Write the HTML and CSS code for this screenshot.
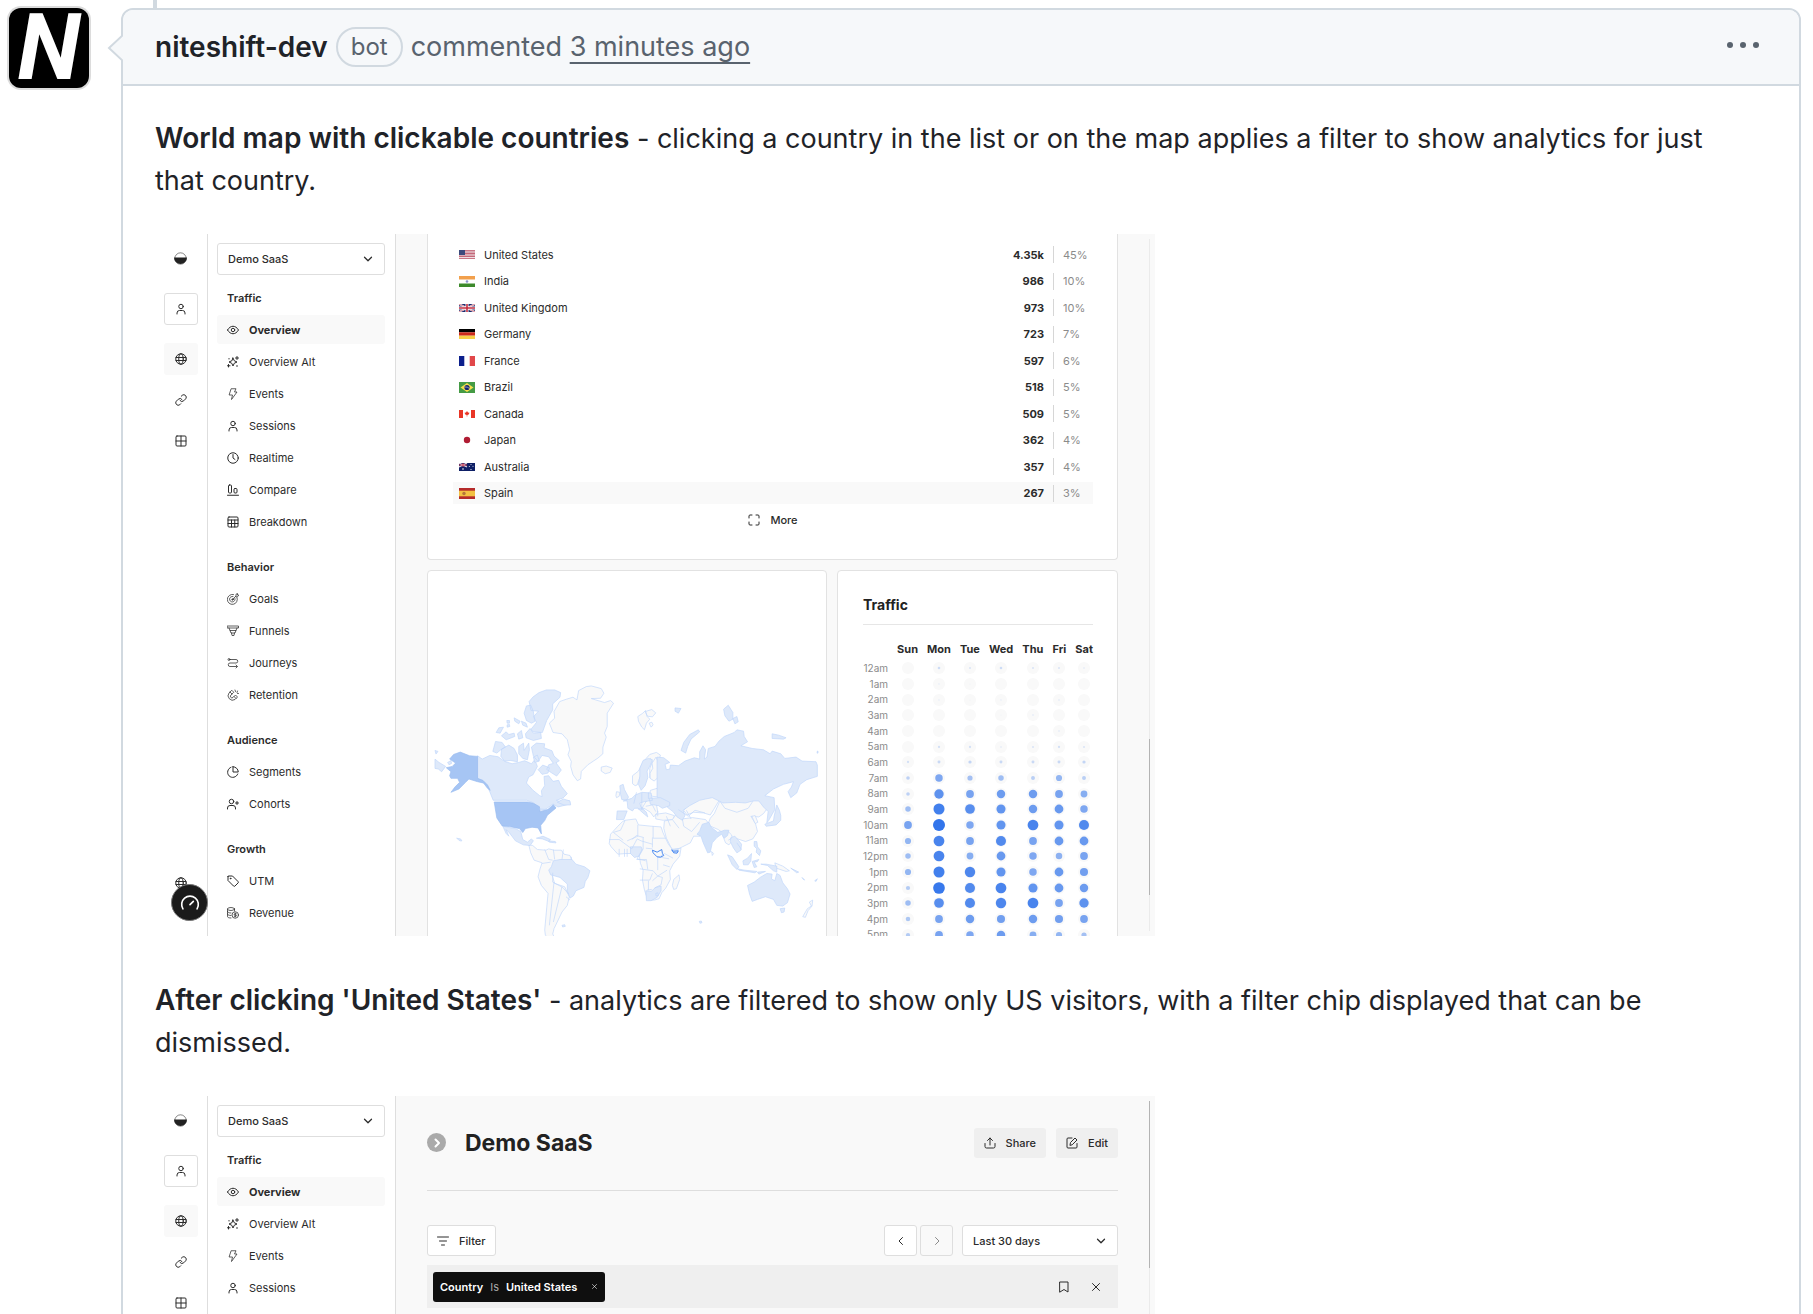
FILE: index.html
```html
<!DOCTYPE html>
<html lang="en">
<head>
<meta charset="utf-8">
<meta name="viewport" content="width=device-width, initial-scale=1">
<title>niteshift-dev commented</title>
<link rel="stylesheet" href="styles.css">
</head>
<body>
<svg class="sprite" aria-hidden="true">
  <symbol id="logo" viewBox="0 0 24 24"><circle cx="12" cy="12" r="10.500" fill="#fff" stroke="#222" stroke-width="1"/><path d="M0 10h24a12 12 0 0 1-24 0z" fill="#222" stroke="none"/></symbol>
  <symbol id="user" viewBox="0 0 24 24"><circle cx="12" cy="7" r="4.500"/><path d="M4 22v-2a5 5 0 0 1 5-5h6a5 5 0 0 1 5 5v2"/></symbol>
  <symbol id="globe" viewBox="0 0 24 24"><circle cx="12" cy="12" r="10.500"/><ellipse cx="12" cy="12" rx="4.500" ry="10.500"/><path d="M2 9h20M2 15h20"/></symbol>
  <symbol id="link" viewBox="0 0 24 24"><path d="M10 13a5 5 0 0 0 7.500.5l4-4a5 5 0 0 0-7-7l-2 2"/><path d="M14 11a5 5 0 0 0-7.500-.5l-4 4a5 5 0 0 0 7 7l2-2"/></symbol>
  <symbol id="grid" viewBox="0 0 24 24"><rect x="2" y="2" width="20" height="20" rx="2"/><path d="M12 2v20M2 12h20"/></symbol>
  <symbol id="eye" viewBox="0 0 24 24"><path d="M1 12c3-5 7-7.500 11-7.500S20 7 23 12c-3 5-7 7.500-11 7.500S4 17 1 12z"/><circle cx="12" cy="12" r="3.500"/></symbol>
  <symbol id="sparkles" viewBox="0 0 24 24"><path d="M12 4l2.500 5.500L20 12l-5.500 2.500L12 20l-2.500-5.500L4 12l5.500-2.500zM20 1v6M17 4h6M3 17v5M1 19.500h5M4 5v1M20 19v2"/></symbol>
  <symbol id="bolt" viewBox="0 0 24 24"><path d="M9 1.500h9L15 8h5L9 23l2-9H5z"/></symbol>
  <symbol id="clock" viewBox="0 0 24 24"><circle cx="12" cy="12" r="10.500"/><path d="M12 5v7l4 3"/></symbol>
  <symbol id="compare" viewBox="0 0 24 24"><rect x="3" y="2" width="6" height="16" rx="2"/><rect x="14" y="9" width="6" height="9" rx="2"/><path d="M1 22.500h22"/></symbol>
  <symbol id="table" viewBox="0 0 24 24"><rect x="2" y="2" width="20" height="20" rx="2"/><path d="M2 8h20M2 15h20M9 8v14M15.500 8v14"/></symbol>
  <symbol id="target" viewBox="0 0 24 24"><path d="M20 9a10 10 0 1 1-7-6M16 11a5.500 5.500 0 1 1-4-4M11 13l7-7V2.500L21 1v3h2.500L21 7.500h-3"/><circle cx="11" cy="13" r="1.500"/></symbol>
  <symbol id="funnel" viewBox="0 0 24 24"><path d="M1 2h22v4H1zM4 6l2 5h12l2-5M6 11l2 5h8l2-5M9 16l1 5h4l1-5"/></symbol>
  <symbol id="path" viewBox="0 0 24 24"><circle cx="4" cy="5" r="2"/><path d="M6 5h12a3.500 3.500 0 0 1 0 7H6a3.500 3.500 0 0 0 0 7h14M18 16l3 3-3 3"/></symbol>
  <symbol id="magnet" viewBox="0 0 24 24"><path d="M9 3L4 8a9 9 0 0 0 12 13l5-5-4-4-5 5a3 3 0 0 1-4-5l5-5zM6 6l4 4M14 15l4 4M16 2l1 3M21 4l-1 3M23 9l-2 0"/></symbol>
  <symbol id="pie" viewBox="0 0 24 24"><path d="M21.500 16A10.500 10.500 0 1 1 8 2.500"/><path d="M12 1.500V12h10.500A10.500 10.500 0 0 0 12 1.500z"/></symbol>
  <symbol id="userplus" viewBox="0 0 24 24"><circle cx="9" cy="7" r="4.500"/><path d="M1 22v-2a5 5 0 0 1 5-5h6a5 5 0 0 1 5 5v2M20 7v6M17 10h6"/></symbol>
  <symbol id="tag" viewBox="0 0 24 24"><path d="M2 3v8l11 11a2 2 0 0 0 3 0l6-6a2 2 0 0 0 0-3L11 2H3a1 1 0 0 0-1 1z"/><circle cx="7" cy="7" r=".8"/></symbol>
  <symbol id="coins" viewBox="0 0 24 24"><ellipse cx="8" cy="4" rx="7" ry="3"/><path d="M1 4v15c0 2 3 3 7 3M1 9c0 2 3 3 7 3M1 14c0 2 3 3 7 3M15 4v4"/><circle cx="16.500" cy="16" r="6.500"/><path d="M18.500 13.500h-3a1 1 0 0 0 0 2.500h2a1 1 0 0 1 0 2.500h-3M16.500 12v8"/></symbol>
  <symbol id="down" viewBox="0 0 24 24"><path d="M5 8.500l7 7 7-7"/></symbol>
  <symbol id="left" viewBox="0 0 24 24"><path d="M15 5l-7 7 7 7"/></symbol>
  <symbol id="right" viewBox="0 0 24 24"><path d="M9 5l7 7-7 7"/></symbol>
  <symbol id="expand" viewBox="0 0 24 24"><path d="M8 2H4a2 2 0 0 0-2 2v4M16 2h4a2 2 0 0 1 2 2v4M8 22H4a2 2 0 0 1-2-2v-4M16 22h4a2 2 0 0 0 2-2v-4"/></symbol>
  <symbol id="gauge" viewBox="0 0 24 24"><path d="M3.500 19a10 10 0 1 1 17 0M12 14l4-4"/></symbol>
  <symbol id="share" viewBox="0 0 24 24"><path d="M2 13v6a3 3 0 0 0 3 3h14a3 3 0 0 0 3-3v-6M12 16V2M7 7l5-5 5 5"/></symbol>
  <symbol id="edit" viewBox="0 0 24 24"><path d="M12 2H4a2 2 0 0 0-2 2v16a2 2 0 0 0 2 2h16a2 2 0 0 0 2-2v-7M8 16l1-5 9-9 4 4-9 9z"/></symbol>
  <symbol id="filter" viewBox="0 0 24 24"><path d="M1 4h22M5 12h14M9 20h6"/></symbol>
  <symbol id="bookmark" viewBox="0 0 24 24"><path d="M4 2h16v20l-8-5-8 5z"/></symbol>
  <symbol id="close" viewBox="0 0 24 24"><path d="M5 5l14 14M19 5L5 19"/></symbol>
</svg>

<article class="timeline">
  <a class="avatar" href="#" aria-label="niteshift-dev"><span>N</span></a>
  <section class="comment">
    <header class="comment-head">
      <svg class="arrow" viewBox="0 0 16 28" aria-hidden="true"><path d="M16 1L2 14l14 13" fill="#f6f8fa" stroke="#d1d9e0" stroke-width="2"/></svg>
      <a class="author" href="#">niteshift-dev</a>
      <span class="badge">bot</span>
      <span class="action">commented <a href="#">3 minutes ago</a></span>
      <button class="kebab" aria-label="Show options"><i></i><i></i><i></i></button>
    </header>
    <div class="comment-body">
      <p><strong>World map with clickable countries</strong> - clicking a country in the list or on the map applies a filter to show analytics for just that country.</p>

      <div class="shot">
        <nav class="rail">
          <svg class="logo"><use href="#logo"/></svg>
          <button class="rail-btn outlined" aria-label="Account"><svg class="ic"><use href="#user"/></svg></button>
          <button class="rail-btn active" aria-label="Websites"><svg class="ic"><use href="#globe"/></svg></button>
          <button class="rail-btn" aria-label="Links"><svg class="ic"><use href="#link"/></svg></button>
          <button class="rail-btn" aria-label="Boards"><svg class="ic"><use href="#grid"/></svg></button>
          <svg class="ic rail-end"><use href="#globe"/></svg>
          <button class="gauge" aria-label="Performance"><svg><use href="#gauge"/></svg></button>
        </nav>
        <nav class="side">
          <button class="select"><span>Demo SaaS</span><svg class="ic"><use href="#down"/></svg></button>
          <div class="group">
            <h4>Traffic</h4>
            <a class="on" href="#"><svg class="ic"><use href="#eye"/></svg>Overview</a>
            <a href="#"><svg class="ic"><use href="#sparkles"/></svg>Overview Alt</a>
            <a href="#"><svg class="ic thin"><use href="#bolt"/></svg>Events</a>
            <a href="#"><svg class="ic"><use href="#user"/></svg>Sessions</a>
            <a href="#"><svg class="ic"><use href="#clock"/></svg>Realtime</a>
            <a href="#"><svg class="ic"><use href="#compare"/></svg>Compare</a>
            <a href="#"><svg class="ic"><use href="#table"/></svg>Breakdown</a>
          </div>
          <div class="group">
            <h4>Behavior</h4>
            <a href="#"><svg class="ic thin"><use href="#target"/></svg>Goals</a>
            <a href="#"><svg class="ic thin"><use href="#funnel"/></svg>Funnels</a>
            <a href="#"><svg class="ic thin"><use href="#path"/></svg>Journeys</a>
            <a href="#"><svg class="ic thin"><use href="#magnet"/></svg>Retention</a>
          </div>
          <div class="group">
            <h4>Audience</h4>
            <a href="#"><svg class="ic"><use href="#pie"/></svg>Segments</a>
            <a href="#"><svg class="ic"><use href="#userplus"/></svg>Cohorts</a>
          </div>
          <div class="group">
            <h4>Growth</h4>
            <a href="#"><svg class="ic"><use href="#tag"/></svg>UTM</a>
            <a href="#"><svg class="ic thin"><use href="#coins"/></svg>Revenue</a>
          </div>
        </nav>
        <div class="main">
          <div class="card list-card">
            <table class="countries">
              <tr><td><svg class="flag" viewBox="0 0 16 9"><path fill="#f4eef0" d="M0 0h16v9H0z"/><path stroke="#b8455a" stroke-width=".8" d="M0 .4h16M0 2h16M0 3.500h16M0 5h16M0 6.500h16M0 8.400h16"/><path fill="#3c4a7c" d="M0 0h6v5H0z"/></svg></td><th scope="row">United States</th><td class="num">4.35k</td><td class="pct">45%</td></tr>
              <tr><td><svg class="flag" viewBox="0 0 16 11"><path fill="#fff" d="M0 0h16v11H0z"/><path fill="#f2a04c" d="M0 0h16v3.500H0z"/><path fill="#3d8a2c" d="M0 7.500h16V11H0z"/><circle cx="8" cy="5.500" r="1.300" fill="#8d94cf"/></svg></td><th scope="row">India</th><td class="num">986</td><td class="pct">10%</td></tr>
              <tr><td><svg class="flag" viewBox="0 0 16 8"><path fill="#1c2a6c" d="M0 0h16v8H0z"/><path stroke="#fff" stroke-width="1.700" d="M0 0l16 8M16 0L0 8"/><path stroke="#c32c3f" stroke-width=".6" d="M0 0l16 8M16 0L0 8"/><path stroke="#fff" stroke-width="3" d="M8 0v8M0 4h16"/><path stroke="#c32c3f" stroke-width="1.600" d="M8 0v8M0 4h16"/></svg></td><th scope="row">United Kingdom</th><td class="num">973</td><td class="pct">10%</td></tr>
              <tr><td><svg class="flag" viewBox="0 0 16 10"><path d="M0 0h16v3.300H0z"/><path fill="#cc2a1c" d="M0 3.300h16v3.400H0z"/><path fill="#f7cf47" d="M0 6.700h16V10H0z"/></svg></td><th scope="row">Germany</th><td class="num">723</td><td class="pct">7%</td></tr>
              <tr><td><svg class="flag" viewBox="0 0 16 10"><path fill="#fff" d="M0 0h16v10H0z"/><path fill="#0c1f8c" d="M0 0h5.300v10H0z"/><path fill="#e1474a" d="M10.700 0H16v10h-5.300z"/></svg></td><th scope="row">France</th><td class="num">597</td><td class="pct">6%</td></tr>
              <tr><td><svg class="flag" viewBox="0 0 16 11"><path fill="#459b45" d="M0 0h16v11H0z"/><path fill="#f5df4d" d="M8 1l6.500 4.500L8 10 1.500 5.500z"/><circle cx="8" cy="5.500" r="2.600" fill="#15246b"/><path d="M5.500 5q3-.5 5 1.500" stroke="#dfe6ee" stroke-width=".6" fill="none"/></svg></td><th scope="row">Brazil</th><td class="num">518</td><td class="pct">5%</td></tr>
              <tr><td><svg class="flag" viewBox="0 0 16 8"><path fill="#fff" d="M0 0h16v8H0z"/><path fill="#e93526" d="M0 0h4v8H0zM12 0h4v8h-4zM8 1l1 1.500 1.500.3-.8 1.700L8.300 5v1.500h-.6V5l-1.400-.5-.8-1.700L7 2.500z"/></svg></td><th scope="row">Canada</th><td class="num">509</td><td class="pct">5%</td></tr>
              <tr><td><svg class="flag" viewBox="0 0 16 10"><path fill="#fff" d="M0 0h16v10H0z"/><circle cx="8" cy="5" r="3.200" fill="#b01c33"/></svg></td><th scope="row">Japan</th><td class="num">362</td><td class="pct">4%</td></tr>
              <tr><td><svg class="flag" viewBox="0 0 16 8"><path fill="#0e1f66" d="M0 0h16v8H0z"/><path stroke="#e9dfe8" stroke-width="1.200" d="M0 0l8 4M8 0L0 4"/><path stroke="#cf4256" stroke-width="1" d="M4 0v4M0 2h8"/><g fill="#fff"><circle cx="4" cy="6" r=".8"/><circle cx="12" cy="1.500" r=".5"/><circle cx="10.300" cy="3.500" r=".5"/><circle cx="14" cy="3.300" r=".5"/><circle cx="12" cy="6.500" r=".6"/></g></svg></td><th scope="row">Australia</th><td class="num">357</td><td class="pct">4%</td></tr>
              <tr class="hover"><td><svg class="flag" viewBox="0 0 16 11"><path fill="#b52b2b" d="M0 0h16v11H0z"/><path fill="#f3c142" d="M0 2.700h16v5.600H0z"/><circle cx="5" cy="5.500" r="1.700" fill="#b5743a"/></svg></td><th scope="row">Spain</th><td class="num">267</td><td class="pct">3%</td></tr>
            </table>
            <button class="more"><svg class="ic"><use href="#expand"/></svg>More</button>
          </div>
          <div class="card-row">
            <div class="card map-card">
              <svg class="map" viewBox="9 0 1197 828" role="img" aria-label="World map of visitors">
                <g class="land">
                  <path d="M457 120L462 92 485 80 500 78 530 86 538 100 528 115 500 116 540 128 558 122 567 130 548 160 548 200 540 220 545 232 535 262 535 282 520 295 505 305 490 315 470 335 468 358 458 363 445 345 438 320 440 305 430 285 435 270 428 240 412 222 385 218 374 190 390 175 388 155 405 125 425 118 445 112z"/>
                  <path d="M640 170l15-10 8-8 5 18 8 8-10 12-6 20-8-8-10-18zM662 155l20-6 12 10-10 12-15-2zM674 190l8-3 4 8-6 7zM530 322l15-3 18 6-6 13-15 4-12-8z"/>
                  <path d="M624 372l0-24 18-14 14-28 20-22 20-6 12 8-4 14-8 46-8 14-12-6 0-28 8-20-6-10-14 12-16 40-10 28-6 2z"/>
                  <path d="M683 310l12-18 8 20 0 40-14 12-12-8 0-16 8-14z"/>
                  <path d="M574 408l2-12 10 2-2 12-8 4z"/>
                  <path d="M642 430l14-10 20 2 20 12 4 24-12 14-10-14-16-10-14-6zM678 392l20-6 10 14-6 12-18-2-8-8zM694 464l30-4 26 8-4 12-30 2-22-4z"/>
                  <path d="M760 430l14-14 30-6 24-12 24 4 34 18-18 30-10 16-20-6-30-2-20 8-10-14 6-6-18-4-8-8z"/>
                  <path d="M886 426l36-10 42 6 24-6 14-14 14 12 18 26-16 22-14 10-24-2 14 22 6 24-14 22-22 8-30-10-24-6-28-20-32-14 8-20 12-14z"/>
                  <path d="M720 484l24-4 10-14 20 12 30-4 40 6 8 10-14 30-10 10-20 0-10 20-24 12-20 10-12-4-16-32-8-30z"/>
                  <path d="M888 426l30-8 44 8 26-4-16 24-34 12-36-12z"/>
                  <path d="M602 482l32-4 8 18 40 4 28 2 6 18 16 34 12 16 26-4-4 24-20 24-10 20 2 26-14 26-12 14-8 18-14 4-20 0-10-30-6-30 2-30-8-20-4-28-20-2-20 0-24 2-20-22-6-10 4-28 20-22 16-16z"/>
                  <path d="M748 660l16-14 2 14-10 28-8 2-4-12zM896 530l14-16 12 12 4 16-12 14-10-6zM983 470l10-2 8 20-8 4z"/>
                  <path d="M1052 610l24 10 20 14-10 2-30-10zM1156 728l10-6-2 18-12 14-8 20-8-2 14-24 12-8zM862 576l6 6-4 6z"/>
                  <path d="M312 556l12 2 14 12 26 2 8-4 16 4 22 0 8 12 18 4 6 14-8 14-36 0-16 30 8 26 30 10 14 30-6 26-16 20-24 50-4 16 6 12-12 6-16-14-2-16 10-110-20-24-10-26 6-24 6-18-24-8-10-22z"/>
                </g>
                <g class="low">
                  <path d="M158 288l14 10 23-11 25 4 20 14 22 7 20-4 18-5 20 9 10-12 8 20-13 25-13 7-7 18 20 22 20 16 7 3-2-18 10-15-2-28 14-2 13 17 17-3 8 18 18 22-13 13-20 7 15 5 24-4 2 10-36 9-15-9-15 11-15 9-10 4-3-12-17-16-20-7H205l-10-25-9-22-28-15z"/>
                  <path d="M313 125l12-14 18-13 22-8 25 0 18 8-2 14-22 20 0 18-18 32-13 36-28-2-6-8 16-20-8-18 14-16-22-2zM298 160l7-22 13-2 8 19 4 30-10 5-15-8zM268 174l18 10-4 8-12-8zM214 218l8-14 14-2-10 18zM230 228l14-12 8 8 16-4 2 10-26 10zM278 222l12-10 4 22-12 4zM290 184l14 6 4 12-14-6zM302 222l14-16 10 14 22-2 2 18-24 6-22-8zM246 182l8 0 0 8-7 0zM247 195l7-1 1 6-8 2z"/>
                  <path d="M204 275l8-30 20 3 10 14-14 8-12 10zM230 268l22-12 16 10 10 20 0 20-22-4-16 2-12-14zM320 262l15-12 25 2-2 12 24 9 6 16 16 14-10 6 16 22-14 18-16-10-14-10 6-14 14-4-14-20-20-4-12 18-14-16zM282 260l14-10 2 22 14-22 2 20-6 30-14-4-12-14zM326 292l12-6 6 18-14 4zM340 330l14-14 20 8-4 16-18 4-8-10zM398 428l18-10 20 6 2 12-20 0z"/>
                  <path d="M234 500l20 4 20 4 14 8 6 24 14 8 12-10 6 6-10 14-20-2-24-12-18-24-10-10 8 20-8-8zM335 536l20-6 22 10-4 6-20-8zM372 544l20 2 2 4-20-2z"/>
                  <path d="M386 604l20-4 18 0 18 0 12 14 26 8 16 12-6 20-8 12-4 18-24 10-8 16-10 6-8-22 0-20-22-20-28-8-6-14 8-10z"/>
                  <path d="M656 302l16-6 12 4-6 16-10 18 2 20-8 24-12 14-8-18 4-24 0-24z"/>
                  <path d="M698 292l20 2 18 14-14 6 4 16 10-2 2-12 24 2 20-14 28-10 16 4 0-22 10-18 8 12-4 28 8-6 4-26 20-6 12-16 16-14 30-12 8-8 20 4 2 16 10 16-20 12 34 8 34 4 20 12 6-8 26 8 12 14 34-4 18 12 42 2 4 10 0 34-32 10-20 14-10 26-18 14-8-18 10-14 6-16-30 8-30 14-26 20 28 6 2 36-18 32-6 8 4-34-14-14-14-18-18 0-22 6-30-2-38 2-32-16-20 4-18 4-30 16-20 14 6 16-8 14-16-10-12-16-16-12-10-14-22-18z"/>
                  <path d="M770 272l8-24 18-24 26-14 4 6-26 22-10 22-6 20zM898 148l14-12 14 22 0 20-12 6-12-16zM926 176l12-6 4 16-10 6zM1044 222l20 4 22 8-8 4-34-2zM752 144l18 2-8 14-10-6zM1180 274l2 0 0 6-3 0zM30 272l9 3-6 8zM30 298l12 10 20 12-12 16-10-8-10-2zM68 308l10-5 2 8-8 4z"/>
                  <path d="M586 378l10-4 4 16 12 22-4 8-16 0-4-16zM596 424l26-8 10-10 20-8 28 2 4 22-24 4-14 4 4 14 16 14 4 14-10-8-20-18-10 0-6 8-14-8-2-22zM578 454l30 0-10 26-22 0zM674 416l34-2 28 14 0 10-22 8-12-8-24-4z"/>
                  <path d="M618 562l32 0 4 10-10 18-14 4-12-12zM664 694l16 2 14-12 16-4 0 14-12 20-18 10-14 0zM920 534l12-4 12 14 8 10-2 18-12 8-10-14-10-20zM742 570l20-2-4 12-12-2z"/>
                  <path d="M1050 470l8-34 8 16 4 16 0 14-14 14-30 4-4-6 26-10zM990 546l8 0 2 16 10 12-4 14-10-10 2-10-8-8zM910 586l14 6 20 30-6 8-14-14zM940 628l20 4 38 4-6 4-48-8zM956 604l14-8 12-14-2 22-8 12-14 0zM984 606l20-6-4 6-10 2 8 14-8 2zM1010 614l16 0 32 6 0 18-10-4-18-16zM1000 638l24-2-20 8z"/>
                  <path d="M970 678l20-10 18-14 20-12 16 2-2 14 10 6 6-22 10 6 8 22 14 18 8 16-8 26-14 10-18-2-10-18-24-8-24 8-16 6-8-22zM1068 748l14-2-2 12-8 2zM1100 626l24 12-6 2zM1134 654l8 8-4-2zM1172 664l8-6-4 8zM825 786l6-1 2 5-6 2zM412 798l8-2 2 5-8 2zM95 536l12 2 4 6-6 0z"/>
                </g>
                <path class="mid" d="M834 494l20-6 6 14 20 16 10-2 10-4 14 0-4 16-10 8-8-12-14 10-14 16-6 28-8 2-14-32-6-18-12-6 8-10z"/>
                <path class="high" d="M158 290l-24-2-28-11-20 7-12 14 18 12-10 10-18 4 14 12-4 12 4 8 20 0 6 12-14 14-12 16 24-10 20-20 10-10 26 8 18 4 12 16 8 6-8-16-14-14-16-6zM208 427h100l18 4 18 10 2 16 24-8 16-14 8 10-26 22-8 16-12 14 2 26-10-18-18-2-20 4-8 12-10-12-10-2-20-4-22-2-16-24z"/>
                <path class="lines" d="M554 540h30l38 28 16-30 12 6 34 10M566 518l30 24M602 482l-14 30-20 6M640 496l0 34-32 14M686 500v36h38M656 534l0 36M622 540l14-12 22 6M684 534l0 30M584 568l0 24M600 568v24M608 568v24M654 568l-16 30 26 6M664 566l20 2M636 600l30 0 4 30M646 628l40 6 14 16 28-18M646 662l30 0 8-20M672 664l0 28M684 664l16-14 14 4-4 22-20 10M700 632l0-40 34 6M706 592l14-10 26 14M716 616l20 6M774 478l4 22 24 16 24-28M744 480l20 26M762 450l30 20 20-18 30 8M786 452l14 26M700 470v-16M664 440l20-4 10 20M652 400v50M672 398l0 20M636 398l-8 34M640 448l20 0M666 424l-16 26M352 612l26-4M360 570l12 30 12 2M386 570l4 30M416 570l-4 30M384 640l0 28 30 16 18 20M388 668l-14 130M412 682l-26 106M424 712l12 10M440 600v-8M344 448l24 2M668 692l14-2M726 470l12 30M938 550l14 20M912 542l10-6M694 702l6-2 2 8-7 2z"/>
                <path class="strong" d="M684 572l14 6 14-8 2 12 4 6-10 5-10-1-12-12zM742 571l6 4 14-1-4 7-10-1z"/>
              </svg>
            </div>
            <div class="card traffic-card">
              <h3>Traffic</h3>
              <table class="heat">
                <thead><tr><td></td><th>Sun</th><th>Mon</th><th>Tue</th><th>Wed</th><th>Thu</th><th>Fri</th><th>Sat</th></tr></thead>
                <tbody id="heat"></tbody>
              </table>
            </div>
          </div>
        </div>
        <div class="scroll low-thumb"><i></i></div>
      </div>

      <p><strong>After clicking 'United States'</strong> - analytics are filtered to show only US visitors, with a filter chip displayed that can be dismissed.</p>

      <div class="shot">
        <nav class="rail">
          <svg class="logo"><use href="#logo"/></svg>
          <button class="rail-btn outlined" aria-label="Account"><svg class="ic"><use href="#user"/></svg></button>
          <button class="rail-btn active" aria-label="Websites"><svg class="ic"><use href="#globe"/></svg></button>
          <button class="rail-btn" aria-label="Links"><svg class="ic"><use href="#link"/></svg></button>
          <button class="rail-btn" aria-label="Boards"><svg class="ic"><use href="#grid"/></svg></button>
        </nav>
        <nav class="side">
          <button class="select"><span>Demo SaaS</span><svg class="ic"><use href="#down"/></svg></button>
          <div class="group">
            <h4>Traffic</h4>
            <a class="on" href="#"><svg class="ic"><use href="#eye"/></svg>Overview</a>
            <a href="#"><svg class="ic"><use href="#sparkles"/></svg>Overview Alt</a>
            <a href="#"><svg class="ic thin"><use href="#bolt"/></svg>Events</a>
            <a href="#"><svg class="ic"><use href="#user"/></svg>Sessions</a>
          </div>
        </nav>
        <div class="main">
          <div class="site-head">
            <span class="site-icon"><svg class="ic bold"><use href="#right"/></svg></span>
            <h2>Demo SaaS</h2>
            <button class="soft"><svg class="ic"><use href="#share"/></svg>Share</button>
            <button class="soft"><svg class="ic"><use href="#edit"/></svg>Edit</button>
          </div>
          <div class="tools">
            <button class="ctl filter"><svg class="ic"><use href="#filter"/></svg>Filter</button>
            <button class="ctl step" aria-label="Previous"><svg class="ic"><use href="#left"/></svg></button>
            <button class="ctl step" disabled aria-label="Next"><svg class="ic"><use href="#right"/></svg></button>
            <button class="ctl range"><span>Last 30 days</span><svg class="ic"><use href="#down"/></svg></button>
          </div>
          <div class="filters">
            <span class="chip"><b>Country</b><span>Is</span><b>United States</b><button aria-label="Remove filter"><svg class="ic"><use href="#close"/></svg></button></span>
            <button class="bare" aria-label="Save segment"><svg class="ic"><use href="#bookmark"/></svg></button>
            <button class="bare" aria-label="Clear filters"><svg class="ic"><use href="#close"/></svg></button>
          </div>
        </div>
        <div class="scroll"><i></i></div>
      </div>
    </div>
  </section>
</article>
<script src="script.js"></script>
</body>
</html>
```

FILE: script.js
```js
// Visits per weekday (Sun to Sat) for each hour, on a scale of 0 to 37.
const hours = [
  ['12am', [2, 8, 6, 8, 6, 6, 5]],
  ['1am', [0, 4, 3, 2, 2, 1, 2]],
  ['2am', [1, 4, 3, 4, 1, 5, 2]],
  ['3am', [0, 1, 1, 3, 5, 1, 2]],
  ['4am', [1, 2, 2, 1, 1, 5, 1]],
  ['5am', [2, 7, 7, 5, 6, 7, 6]],
  ['6am', [7, 9, 10, 9, 9, 9, 10]],
  ['7am', [11, 23, 16, 17, 12, 19, 12]],
  ['8am', [11, 29, 24, 26, 26, 24, 21]],
  ['9am', [17, 34, 30, 28, 26, 27, 23]],
  ['10am', [24, 37, 23, 28, 33, 28, 31]],
  ['11am', [19, 33, 24, 31, 24, 27, 27]],
  ['12pm', [17, 33, 21, 27, 23, 20, 24]],
  ['1pm', [19, 34, 32, 28, 23, 27, 25]],
  ['2pm', [13, 36, 31, 33, 28, 27, 26]],
  ['3pm', [17, 30, 31, 32, 33, 24, 29]],
  ['4pm', [14, 24, 26, 25, 26, 25, 24]],
  ['5pm', [13, 24, 23, 26, 21, 19, 16]]
];
const max = 37;
document.getElementById('heat').innerHTML = hours.map(([label, values]) =>
  `<tr><th scope="row">${label}</th>` + values.map(v => {
    const share = v / max;
    return `<td><svg class="dot" viewBox="0 0 12 12"><circle class="base" cx="6" cy="6" r="6"/><circle class="value" cx="6" cy="6" r="${(share * 6).toFixed(2)}" opacity="${share.toFixed(2)}"/></svg></td>`;
  }).join('') + '</tr>').join('');
```

FILE: styles.css
```css
* { box-sizing: border-box; }
html, body { height: 100%; }
body { margin: 0; background: #fff; color: #1f2328; font: 27px/42px Inter, "Liberation Sans", sans-serif; overflow: hidden; }
a { color: inherit; text-decoration: none; }
button { font: inherit; color: inherit; background: none; border: 0; padding: 0; margin: 0; }
h2, h3, h4, p { margin: 0; }
svg { display: block; flex: none; }
.sprite { position: absolute; width: 0; height: 0; }

.timeline { position: relative; display: flex; align-items: flex-start; gap: 32px; padding: 8px 12px 0 9px; }
.timeline::before { content: ""; position: absolute; left: 153px; top: 0; width: 4px; height: 8px; background: #d1d9e0; }
.avatar { width: 80px; height: 80px; flex: none; border-radius: 12px; background: #000; color: #fff; box-shadow: 0 0 0 2px #dcdcdc; display: flex; align-items: center; justify-content: center; font: italic 700 92px/80px Roboto, sans-serif; }
.comment { flex: 1; min-width: 0; border: 2px solid #d1d9e0; border-radius: 12px; }
.comment-head { position: relative; display: flex; align-items: center; height: 76px; padding: 0 40px 0 32px; background: #f6f8fa; border-bottom: 2px solid #d1d9e0; border-radius: 10px 10px 0 0; color: #59636e; }
.arrow { position: absolute; left: -16px; top: 24px; width: 16px; height: 28px; }
.author { font-size: 28px; font-weight: 600; color: #1f2328; }
.badge { margin: 0 8px; padding: 0 13px; border: 2px solid #d1d9e0; border-radius: 20px; font-size: 24px; line-height: 36px; }
.action a { text-decoration: underline; text-decoration-thickness: 2px; text-underline-offset: 6px; }
.kebab { display: flex; gap: 7px; margin: 0 0 4px auto; }
.kebab i { width: 6px; height: 6px; border-radius: 50%; background: #59636e; }
.comment-body { padding: 32px; }
.comment-body p { margin-bottom: 32px; padding-right: 32px; }
.comment-body strong { font-size: 28px; line-height: 28px; font-weight: 600; }

.shot { position: relative; display: flex; max-width: 1000px; height: 702px; margin-bottom: 44px; overflow: hidden; background: #fff; color: #2b2b2b; font-size: 11px; line-height: 16px; }
.ic { width: 12px; height: 12px; fill: none; stroke: currentColor; stroke-width: 2; stroke-linecap: round; stroke-linejoin: round; overflow: visible; }
.ic.thin { stroke-width: 1.5; }
.ic.bold { stroke-width: 4; }

.rail { position: relative; width: 53px; flex: none; display: flex; flex-direction: column; align-items: center; border-right: 1px solid #dedede; padding: 18px 1px 0 0; }
.logo { width: 13px; height: 13px; margin-bottom: 28px; }
.rail-btn { width: 34px; height: 32px; margin-bottom: 9px; border-radius: 3px; display: flex; align-items: center; justify-content: center; }
.rail-btn.outlined { border: 1px solid #dedede; margin-bottom: 18px; }
.rail-btn.active { background: #f9f9f9; }
.rail-end { position: absolute; left: 20px; bottom: 47px; }
.gauge { position: absolute; left: 16px; bottom: 15px; width: 37px; height: 37px; border-radius: 50%; background: #1b1b1b; border: 1px solid #777; display: flex; align-items: center; justify-content: center; }
.gauge svg { width: 20px; height: 20px; fill: none; stroke: #fff; stroke-width: 2; stroke-linecap: round; }

.side { width: 188px; flex: none; border-right: 1px solid #dedede; padding: 9px 10px 0 9px; }
.select { display: flex; align-items: center; justify-content: space-between; width: 100%; height: 32px; padding: 0 10px; margin-bottom: 9px; border: 1px solid #dedede; border-radius: 3px; font-weight: 500; }
.select .ic, .range .ic { stroke-width: 2.5; }
.group { display: flex; flex-direction: column; gap: 3px; margin-bottom: 17px; }
.group h4 { font-size: 11px; line-height: 28px; font-weight: 600; padding-left: 10px; }
.group a { display: flex; align-items: center; gap: 10px; height: 29px; padding-left: 10px; border-radius: 3px; }
.group a.on { background: #f9f9f9; font-weight: 700; }

.main { flex: 1; min-width: 0; background: #f9f9f9; padding: 0 37px 0 31px; }
.card { background: #fff; border: 1px solid #e2e2e2; border-radius: 4px; }
.list-card { border-top: 0; border-radius: 0 0 4px 4px; padding: 5px 24px 31px 25px; margin-bottom: 10px; }
.countries { width: 100%; border-collapse: separate; border-spacing: 0 4px; }
.countries td, .countries th { padding: 0; height: 23px; line-height: 16px; text-align: left; font-weight: 400; }
.countries tr:nth-child(2n) td, .countries tr:nth-child(2n) th { height: 22px; }
.countries td:first-child { width: 31px; padding-left: 6px; }
.countries .num { text-align: right; font-weight: 700; padding-right: 9px; }
.countries .pct { width: 40px; color: #8b8b8b; background: linear-gradient(#d6d6d6, #d6d6d6) no-repeat left center / 1px 17px; padding-left: 10px; }
.countries .hover { background: #f9f9f9; }
.countries .hover .pct { background-color: #f9f9f9; }
.flag { width: 16px; height: auto; }
.more { display: flex; align-items: center; gap: 10px; margin: 4px auto 0; font-weight: 500; }
.card-row { display: grid; grid-template-columns: 400fr 281fr; gap: 10px; }
.map-card { height: 440px; }
.map { width: 100%; padding-top: 89px; overflow: visible; box-sizing: content-box; }
.map path { stroke: #bfd6fa; stroke-width: 2; stroke-linejoin: round; fill: none; }
.map .land path { fill: #f9f9f9; }
.map .low path { fill: #dee9fa; }
.map path.mid { fill: #d3e3fa; }
.map path.high { fill: #a6c5f4; stroke: #98bbf0; }
.map path.strong { stroke: #4a8af0; stroke-width: 3; }
.traffic-card { padding: 24px 24px 0 25px; }
.traffic-card h3 { font-size: 14px; line-height: 20px; font-weight: 700; color: #222; padding-bottom: 9px; border-bottom: 1px solid #e6e6e6; margin-bottom: 13px; }
.heat { width: 100%; border-collapse: collapse; }
.heat td, .heat th { padding: 0 0 0 9px; line-height: 15px; }
.heat thead th { height: 22px; font-weight: 700; }
.heat tbody tr { height: 16px; }
.heat tbody tr:nth-child(3n) { height: 15px; }
.heat tbody th { font-size: 10px; font-weight: 400; color: #8b8b8b; text-align: right; width: 24px; padding: 0; }
.dot { width: 12px; height: 12px; margin: 0 auto; }
.dot .base { fill: #f9f9f9; }
.dot .value { fill: #3275eb; }

.scroll { position: absolute; right: 5px; top: 5px; bottom: 5px; width: 1px; background: #ebebeb; }
.scroll i { display: block; height: 167px; background: #b4b4b4; }
.scroll.low-thumb i { margin-top: 500px; height: 156px; }

.site-head { display: flex; align-items: center; gap: 10px; height: 95px; border-bottom: 1px solid #dedede; padding-bottom: 1px; }
.site-icon { width: 19px; height: 19px; border-radius: 50%; background: #aaa; color: #fff; display: flex; align-items: center; justify-content: center; }
.site-head h2 { flex: 1; padding-left: 9px; font-size: 23px; line-height: 32px; font-weight: 700; color: #222; }
.soft { display: flex; align-items: center; gap: 10px; height: 30px; padding: 0 10px; border-radius: 3px; background: #efefef; font-weight: 500; }
.tools { display: flex; align-items: center; padding-top: 34px; margin-bottom: 9px; }
.ctl { display: flex; align-items: center; justify-content: center; gap: 10px; height: 31px; border: 1px solid #dedede; border-radius: 3px; background: #fff; font-weight: 500; }
.filter { padding: 0 9px; margin-right: auto; }
.step { width: 33px; margin-right: 3px; }
.step:disabled { background: #f9f9f9; color: #8b8b8b; margin-right: 9px; }
.range { width: 156px; justify-content: space-between; padding: 0 10px; }
.filters { display: flex; align-items: center; height: 43px; padding: 0 16px 0 6px; background: #efefef; }
.chip { display: flex; align-items: center; gap: 7px; height: 30px; padding: 0 7px; margin-right: auto; border-radius: 3px; background: #0f0f0f; color: #fff; }
.chip b { font-weight: 600; }
.chip span { color: #aaa; }
.chip button { margin-left: 7px; }
.chip .ic { width: 7px; height: 7px; }
.bare { margin-left: 20px; }
```
